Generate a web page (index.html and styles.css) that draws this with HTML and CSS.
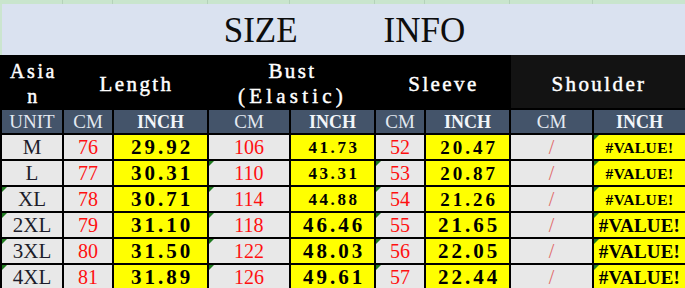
FILE: index.html
```html
<!DOCTYPE html>
<html>
<head>
<meta charset="utf-8">
<link rel="stylesheet" href="styles.css">
</head>
<body>
<div class="sheet">
  <div class="gridlines">
    <span></span><span></span><span></span><span></span><span></span><span></span><span></span><span></span><span></span>
  </div>
  <div class="title"><span>SIZE</span><span>INFO</span></div>
  <div class="table">
    <div class="h asian">Asian</div>
    <div class="h span2">Length</div>
    <div class="h span2 stack"><span>Bust</span><span class="wide">(Elastic)</span></div>
    <div class="h span2">Sleeve</div>
    <div class="h span2 dark">Shoulder</div>

    <div class="u">UNIT</div>
    <div class="u">CM</div>
    <div class="u b">INCH</div>
    <div class="u">CM</div>
    <div class="u b">INCH</div>
    <div class="u">CM</div>
    <div class="u b">INCH</div>
    <div class="u">CM</div>
    <div class="u b">INCH</div>

    <div class="c sz">M</div>
    <div class="c cm">76</div>
    <div class="c in">29.92</div>
    <div class="c cm">106</div>
    <div class="c in sm">41.73</div>
    <div class="c cm">52</div>
    <div class="c in md">20.47</div>
    <div class="c sl">/</div>
    <div class="c in val sm tri">#VALUE!</div>

    <div class="c sz">L</div>
    <div class="c cm">77</div>
    <div class="c in">30.31</div>
    <div class="c cm tri">110</div>
    <div class="c in sm">43.31</div>
    <div class="c cm tri">53</div>
    <div class="c in md">20.87</div>
    <div class="c sl">/</div>
    <div class="c in val sm tri">#VALUE!</div>

    <div class="c sz tri">XL</div>
    <div class="c cm">78</div>
    <div class="c in">30.71</div>
    <div class="c cm tri">114</div>
    <div class="c in sm">44.88</div>
    <div class="c cm tri">54</div>
    <div class="c in md">21.26</div>
    <div class="c sl">/</div>
    <div class="c in val sm tri">#VALUE!</div>

    <div class="c sz tri">2XL</div>
    <div class="c cm">79</div>
    <div class="c in">31.10</div>
    <div class="c cm tri">118</div>
    <div class="c in">46.46</div>
    <div class="c cm tri">55</div>
    <div class="c in">21.65</div>
    <div class="c sl">/</div>
    <div class="c in val tri">#VALUE!</div>

    <div class="c sz tri">3XL</div>
    <div class="c cm">80</div>
    <div class="c in">31.50</div>
    <div class="c cm tri">122</div>
    <div class="c in">48.03</div>
    <div class="c cm tri">56</div>
    <div class="c in">22.05</div>
    <div class="c sl">/</div>
    <div class="c in val tri">#VALUE!</div>

    <div class="c sz tri">4XL</div>
    <div class="c cm">81</div>
    <div class="c in">31.89</div>
    <div class="c cm tri">126</div>
    <div class="c in">49.61</div>
    <div class="c cm tri">57</div>
    <div class="c in">22.44</div>
    <div class="c sl">/</div>
    <div class="c in val tri">#VALUE!</div>
  </div>
</div>
</body>
</html>
```

FILE: styles.css
```css
html, body {
  margin: 0;
  padding: 0;
}
body {
  width: 685px;
  height: 288px;
  overflow: hidden;
  background: #cbe5cf;
}
.sheet {
  width: 685px;
  height: 288px;
  overflow: hidden;
  display: flex;
  flex-direction: column;
}
.gridlines {
  height: 4px;
  display: grid;
  grid-template-columns: 62px 49px 94px 81px 84px 49px 84px 82px 100px;
  column-gap: 1px;
  background: #b4d2b9;
  flex: none;
}
.gridlines span {
  background: #c9e5cd;
}
.title {
  height: 51px;
  margin-left: 2px;
  background: #dae2f0;
  display: flex;
  justify-content: center;
  align-items: center;
  gap: 86px;
  padding: 3px 0 0 2px;
  box-sizing: border-box;
  font-family: "Liberation Serif", serif;
  font-size: 35px;
  color: #0d0d0d;
  flex: none;
}
.table {
  display: grid;
  grid-template-columns: 60px 48px 93px 80px 83px 48px 83px 81px 91px;
  grid-template-rows: 53px 23px repeat(6, 24px);
  gap: 2px;
  padding-left: 2px;
  background: #000;
  flex: none;
  width: 685px;
  box-sizing: border-box;
}
.h {
  background: #000;
  color: #fff;
  font-family: "Liberation Serif", serif;
  font-size: 21px;
  letter-spacing: 2.4px;
  line-height: 25px;
  -webkit-text-stroke: 0.45px #fff;
  display: flex;
  align-items: center;
  justify-content: center;
  text-align: center;
  padding: 5px 0 0 2px;
}
.h.asian {
  padding: 4px 4px 0 7px;
  word-break: break-all;
  font-size: 20px;
  letter-spacing: 2.6px;
}
.h.span2 {
  grid-column: span 2;
}
.h.stack {
  flex-direction: column;
  padding-top: 4px;
}
.h .wide {
  letter-spacing: 4.2px;
}
.h.dark {
  background: #131313;
}
.u {
  background: #44546a;
  color: #e3e9f1;
  font-family: "Liberation Serif", serif;
  font-size: 19px;
  display: flex;
  align-items: center;
  justify-content: center;
  padding-top: 1px;
}
.u.b {
  font-weight: 700;
  font-size: 18px;
  color: #f2f5f9;
}
.c {
  position: relative;
  background: #e8e8e8;
  display: flex;
  align-items: center;
  justify-content: center;
  padding-top: 1px;
}
.sz {
  font-family: "Liberation Serif", serif;
  font-size: 21px;
  color: #1c1c2a;
}
.cm {
  font-family: "Liberation Serif", serif;
  font-size: 20px;
  color: #ff1010;
}
.in {
  background: #ffff00;
  font-family: "Liberation Serif", serif;
  font-weight: 700;
  font-size: 21px;
  letter-spacing: 3px;
  padding-left: 3px;
  color: #000;
}
.in.sm {
  font-size: 17px;
  letter-spacing: 2.6px;
}
.in.md {
  font-size: 19px;
  letter-spacing: 3px;
}
.in.val {
  font-size: 19px;
  letter-spacing: 0.2px;
  padding-left: 0;
}
.in.val.sm {
  font-size: 15.5px;
  letter-spacing: 0.4px;
}
.sl {
  font-family: "Liberation Serif", serif;
  font-size: 20px;
  color: #e06a6a;
}
.tri::before {
  content: "";
  position: absolute;
  left: 0;
  top: 0;
  border-top: 5px solid #1f7a1f;
  border-right: 5px solid transparent;
}
```
